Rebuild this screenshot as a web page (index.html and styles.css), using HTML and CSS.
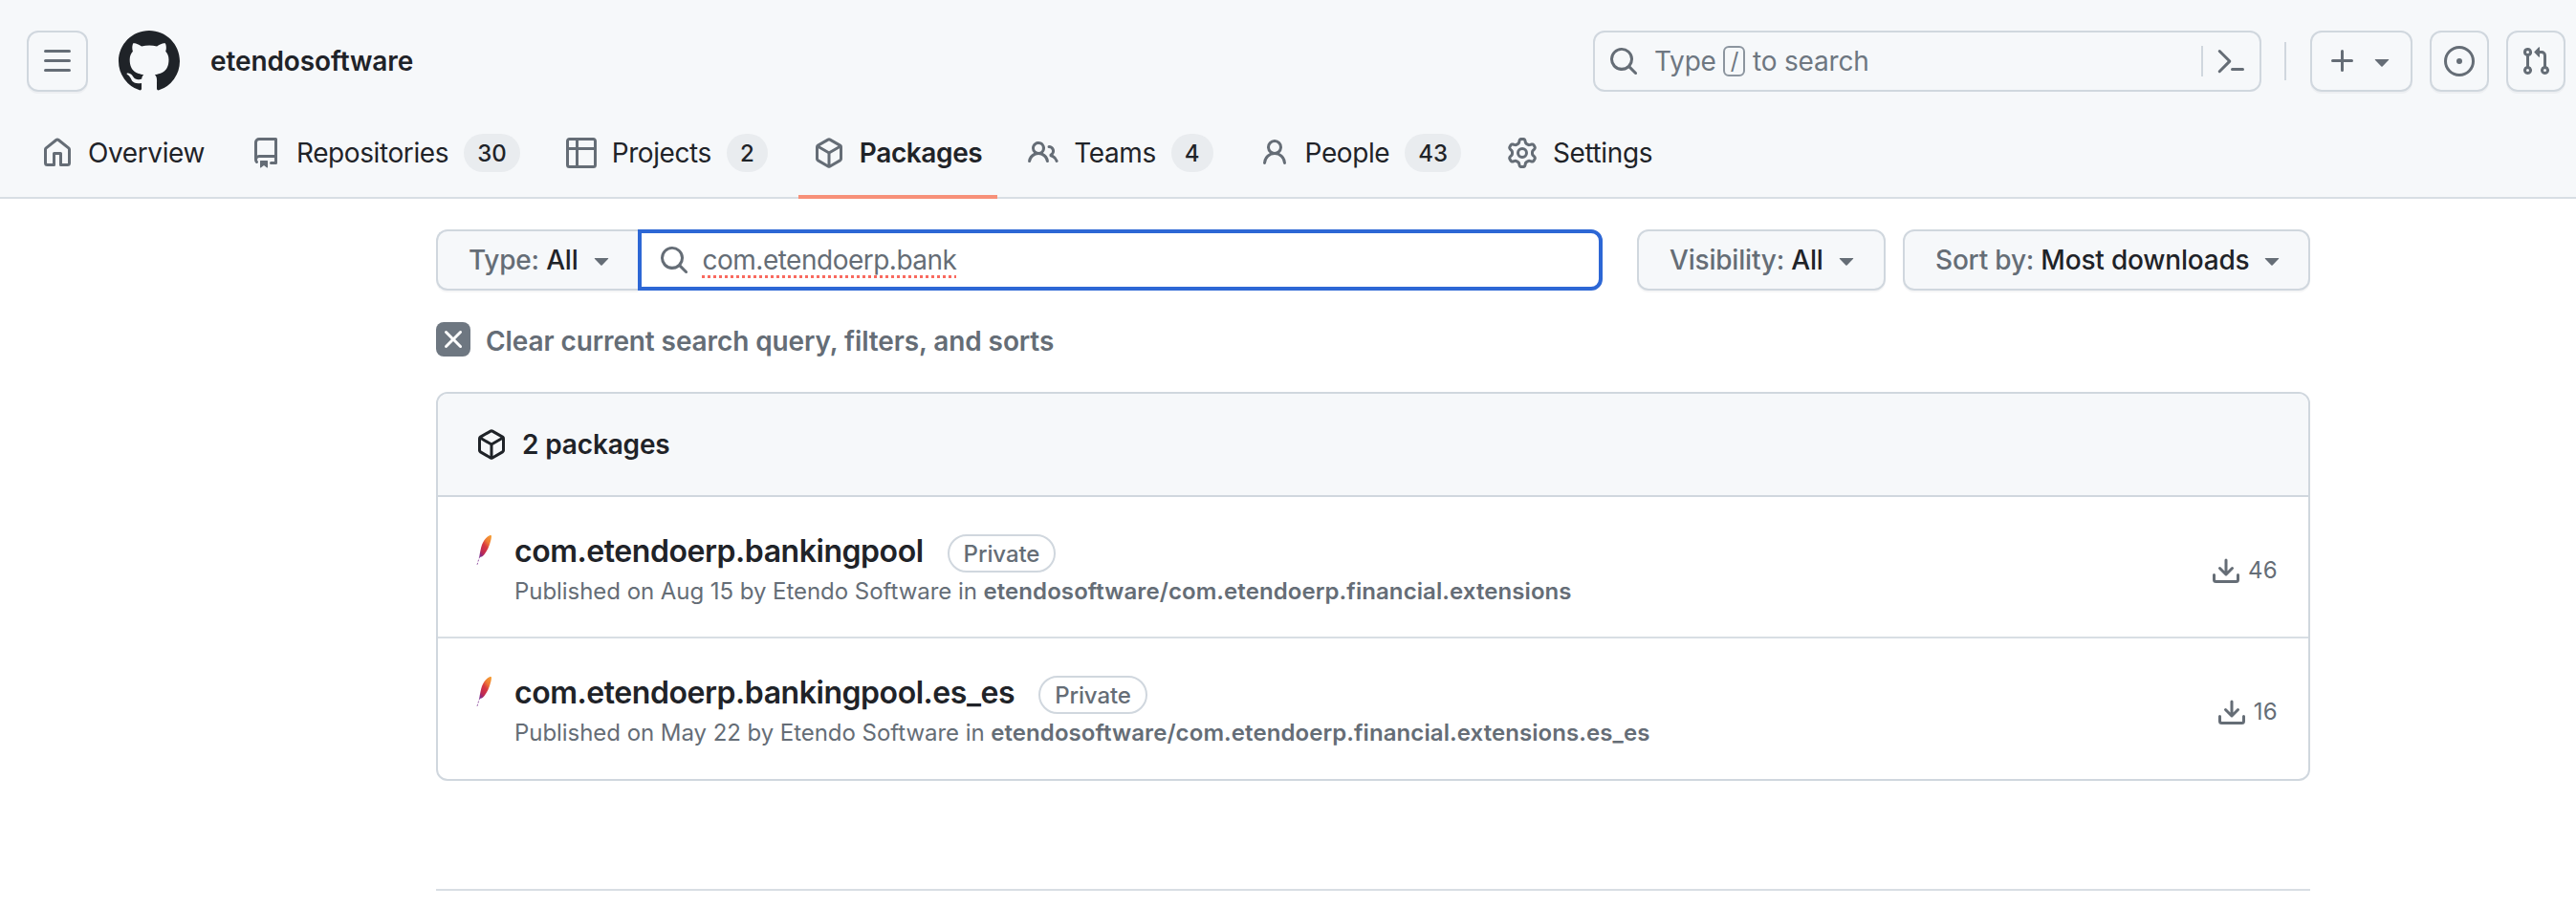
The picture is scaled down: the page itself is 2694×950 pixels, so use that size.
FILE: index.html
```html
<!DOCTYPE html>
<html lang="en">
<head>
<meta charset="utf-8">
<title>Packages · etendosoftware</title>
<link rel="stylesheet" href="styles.css">
</head>
<body>
<svg class="sprite" aria-hidden="true">
  <defs>
    <symbol id="i-bars" viewBox="0 0 16 16"><path d="M1 2.75A.75.75 0 0 1 1.75 2h12.5a.75.75 0 0 1 0 1.5H1.75A.75.75 0 0 1 1 2.75Zm0 5A.75.75 0 0 1 1.75 7h12.5a.75.75 0 0 1 0 1.5H1.75A.75.75 0 0 1 1 7.75ZM1.75 12h12.5a.75.75 0 0 1 0 1.5H1.75a.75.75 0 0 1 0-1.5Z"/></symbol>
    <symbol id="i-mark" viewBox="0 0 16 16"><path d="M8 0c4.42 0 8 3.58 8 8a8.013 8.013 0 0 1-5.45 7.59c-.4.08-.55-.17-.55-.38 0-.27.01-1.13.01-2.2 0-.75-.25-1.23-.54-1.48 1.78-.2 3.65-.88 3.65-3.95 0-.88-.31-1.59-.82-2.15.08-.2.36-1.02-.08-2.12 0 0-.67-.22-2.2.82-.64-.18-1.32-.27-2-.27-.68 0-1.36.09-2 .27-1.53-1.03-2.2-.82-2.2-.82-.44 1.1-.16 1.92-.08 2.12-.51.56-.82 1.28-.82 2.15 0 3.06 1.86 3.75 3.64 3.95-.23.2-.44.55-.51 1.07-.46.21-1.61.55-2.33-.66-.15-.24-.6-.83-1.23-.82-.67.01-.27.38.01.53.34.19.73.9.82 1.13.16.45.68 1.31 2.69.94 0 .67.01 1.3.01 1.49 0 .21-.15.45-.55.38A7.995 7.995 0 0 1 0 8c0-4.42 3.58-8 8-8Z"/></symbol>
    <symbol id="i-home" viewBox="0 0 16 16"><path d="M6.906.664a1.749 1.749 0 0 1 2.187 0l5.25 4.2c.415.332.657.835.657 1.367v7.019A1.75 1.75 0 0 1 13.25 15h-3.5a.75.75 0 0 1-.75-.75V9H7v5.25a.75.75 0 0 1-.75.75h-3.5A1.75 1.75 0 0 1 1 13.25V6.23c0-.531.242-1.034.657-1.366l5.25-4.2Zm1.25 1.171a.25.25 0 0 0-.312 0l-5.25 4.2a.25.25 0 0 0-.094.196v7.019c0 .138.112.25.25.25H5.5V8.25a.75.75 0 0 1 .75-.75h3.5a.75.75 0 0 1 .75.75v5.25h2.75a.25.25 0 0 0 .25-.25V6.23a.25.25 0 0 0-.094-.195Z"/></symbol>
    <symbol id="i-repo" viewBox="0 0 16 16"><path d="M2 2.5A2.5 2.5 0 0 1 4.5 0h8.75a.75.75 0 0 1 .75.75v12.5a.75.75 0 0 1-.75.75h-2.5a.75.75 0 0 1 0-1.5h1.75v-2h-8a1 1 0 0 0-.714 1.7.75.75 0 1 1-1.072 1.05A2.495 2.495 0 0 1 2 11.5Zm10.5-1h-8a1 1 0 0 0-1 1v6.708A2.486 2.486 0 0 1 4.5 9h8ZM5 12.25a.25.25 0 0 1 .25-.25h3.5a.25.25 0 0 1 .25.25v3.25a.25.25 0 0 1-.4.2l-1.45-1.087a.249.249 0 0 0-.3 0L5.4 15.7a.25.25 0 0 1-.4-.2Z"/></symbol>
    <symbol id="i-table" viewBox="0 0 16 16"><path d="M0 1.75C0 .784.784 0 1.75 0h12.5C15.216 0 16 .784 16 1.75v12.5A1.75 1.75 0 0 1 14.25 16H1.75A1.75 1.75 0 0 1 0 14.25ZM6.5 6.5v8h7.75a.25.25 0 0 0 .25-.25V6.5Zm8-1.5V1.75a.25.25 0 0 0-.25-.25H6.5V5Zm-13 1.5v7.75c0 .138.112.25.25.25H5v-8ZM5 5V1.5H1.75a.25.25 0 0 0-.25.25V5Z"/></symbol>
    <symbol id="i-package" viewBox="0 0 16 16"><path fill-rule="evenodd" d="M8.878.392a1.75 1.75 0 0 0-1.756 0l-5.25 3.045A1.75 1.75 0 0 0 1 4.951v6.098c0 .624.332 1.2.872 1.514l5.25 3.045a1.75 1.75 0 0 0 1.756 0l5.25-3.045c.54-.313.872-.89.872-1.514V4.951c0-.624-.332-1.2-.872-1.514ZM7.875 1.69a.25.25 0 0 1 .25 0l4.63 2.685L8 7.133 3.245 4.375l4.63-2.685ZM2.5 5.677v5.372c0 .09.047.171.125.216l4.625 2.683V8.432Zm6.25 8.271 4.625-2.683a.25.25 0 0 0 .125-.216V5.677L8.75 8.432Z"/></symbol>
    <symbol id="i-people" viewBox="0 0 16 16"><path d="M2 5.5a3.5 3.5 0 1 1 5.898 2.549 5.508 5.508 0 0 1 3.034 4.084.75.75 0 1 1-1.482.235 4 4 0 0 0-7.9 0 .75.75 0 0 1-1.482-.236A5.507 5.507 0 0 1 3.102 8.05 3.493 3.493 0 0 1 2 5.5ZM11 4a3.001 3.001 0 0 1 2.22 5.018 5.01 5.01 0 0 1 2.56 3.012.749.749 0 0 1-.885.954.752.752 0 0 1-.549-.514 3.507 3.507 0 0 0-2.522-2.372.75.75 0 0 1-.574-.73v-.352a.75.75 0 0 1 .416-.672A1.5 1.5 0 0 0 11 5.5.75.75 0 0 1 11 4Zm-5.5-.5a2 2 0 1 0-.001 3.999A2 2 0 0 0 5.5 3.5Z"/></symbol>
    <symbol id="i-person" viewBox="0 0 16 16"><path d="M10.561 8.073a6.005 6.005 0 0 1 3.432 5.142.75.75 0 1 1-1.498.07 4.5 4.5 0 0 0-8.99 0 .75.75 0 0 1-1.498-.07 6.004 6.004 0 0 1 3.431-5.142 3.999 3.999 0 1 1 5.123 0ZM10.5 5a2.5 2.5 0 1 0-5 0 2.5 2.5 0 0 0 5 0Z"/></symbol>
    <symbol id="i-gear" viewBox="0 0 16 16"><path d="M8 0a8.2 8.2 0 0 1 .701.031C9.444.095 9.99.645 10.16 1.29l.288 1.107c.018.066.079.158.212.224.231.114.454.243.668.386.123.082.233.09.299.071l1.103-.303c.644-.176 1.392.021 1.82.63.27.385.506.792.704 1.218.315.675.111 1.422-.364 1.891l-.814.806c-.049.048-.098.147-.088.294.016.257.016.515 0 .772-.01.147.038.246.088.294l.814.806c.475.469.679 1.216.364 1.891a7.977 7.977 0 0 1-.704 1.217c-.428.61-1.176.807-1.82.63l-1.102-.302c-.067-.019-.177-.011-.3.071a5.909 5.909 0 0 1-.668.386c-.133.066-.194.158-.211.224l-.29 1.106c-.168.646-.715 1.196-1.458 1.26a8.006 8.006 0 0 1-1.402 0c-.743-.064-1.289-.614-1.458-1.26l-.289-1.106c-.018-.066-.079-.158-.212-.224a5.738 5.738 0 0 1-.668-.386c-.123-.082-.233-.09-.299-.071l-1.103.303c-.644.176-1.392-.021-1.82-.63a8.12 8.12 0 0 1-.704-1.218c-.315-.675-.111-1.422.363-1.891l.815-.806c.05-.048.098-.147.088-.294a6.214 6.214 0 0 1 0-.772c.01-.147-.038-.246-.088-.294l-.815-.806C.635 6.045.431 5.298.746 4.623a7.92 7.92 0 0 1 .704-1.217c.428-.61 1.176-.807 1.82-.63l1.102.302c.067.019.177.011.3-.071.214-.143.437-.272.668-.386.133-.066.194-.158.211-.224l.29-1.106C6.009.645 6.556.095 7.299.03 7.53.01 7.764 0 8 0Zm-.571 1.525c-.036.003-.108.036-.137.146l-.289 1.105c-.147.561-.549.967-.998 1.189-.173.086-.34.183-.5.29-.417.278-.97.423-1.529.27l-1.103-.303c-.109-.03-.175.016-.195.045-.22.312-.412.644-.573.99-.014.031-.021.11.059.19l.815.806c.411.406.562.957.53 1.456a4.709 4.709 0 0 0 0 .582c.032.499-.119 1.05-.53 1.456l-.815.806c-.081.08-.073.159-.059.19.162.346.353.677.573.989.02.03.085.076.195.046l1.102-.303c.56-.153 1.113-.008 1.53.27.161.107.328.204.501.29.447.222.85.629.997 1.189l.289 1.105c.029.109.101.143.137.146a6.6 6.6 0 0 0 1.142 0c.036-.003.108-.036.137-.146l.289-1.105c.147-.561.549-.967.998-1.189.173-.086.34-.183.5-.29.417-.278.97-.423 1.529-.27l1.103.303c.109.029.175-.016.195-.045.22-.313.411-.644.573-.99.014-.031.021-.11-.059-.19l-.815-.806c-.411-.406-.562-.957-.53-1.456a4.709 4.709 0 0 0 0-.582c-.032-.499.119-1.05.53-1.456l.815-.806c.081-.08.073-.159.059-.19a6.464 6.464 0 0 0-.573-.989c-.02-.03-.085-.076-.195-.046l-1.102.303c-.56.153-1.113.008-1.53-.27a4.44 4.44 0 0 0-.501-.29c-.447-.222-.85-.629-.997-1.189l-.289-1.105c-.029-.11-.101-.143-.137-.146a6.6 6.6 0 0 0-1.142 0ZM11 8a3 3 0 1 1-6 0 3 3 0 0 1 6 0ZM9.5 8a1.5 1.5 0 1 0-3.001.001A1.5 1.5 0 0 0 9.5 8Z"/></symbol>
    <symbol id="i-search" viewBox="0 0 16 16"><path d="M10.68 11.74a6 6 0 0 1-7.922-8.982 6 6 0 0 1 8.982 7.922l3.04 3.04a.749.749 0 0 1-.326 1.275.749.749 0 0 1-.734-.215ZM11.5 7a4.499 4.499 0 1 0-8.997 0A4.499 4.499 0 0 0 11.5 7Z"/></symbol>
    <symbol id="i-terminal" viewBox="0 0 16 16"><path d="M6.354 8.04l-4.773 4.773a.75.75 0 1 0 1.061 1.06L7.945 8.57a.75.75 0 0 0 0-1.06L2.642 2.206a.75.75 0 0 0-1.06 1.061L6.353 8.04ZM8.75 11.5a.75.75 0 0 0 0 1.5h5.5a.75.75 0 0 0 0-1.5h-5.5Z"/></symbol>
    <symbol id="i-plus" viewBox="0 0 16 16"><path d="M7.75 2a.75.75 0 0 1 .75.75V7h4.25a.75.75 0 0 1 0 1.5H8.5v4.25a.75.75 0 0 1-1.5 0V8.5H2.75a.75.75 0 0 1 0-1.5H7V2.75A.75.75 0 0 1 7.75 2Z"/></symbol>
    <symbol id="i-caret" viewBox="0 0 16 16"><path d="m4.427 7.427 3.396 3.396a.25.25 0 0 0 .354 0l3.396-3.396A.25.25 0 0 0 11.396 7H4.604a.25.25 0 0 0-.177.427Z"/></symbol>
    <symbol id="i-issue" viewBox="0 0 16 16"><path d="M8 9.5a1.5 1.5 0 1 0 0-3 1.5 1.5 0 0 0 0 3Z"/><path d="M8 0a8 8 0 1 1 0 16A8 8 0 0 1 8 0ZM1.5 8a6.5 6.5 0 1 0 13 0 6.5 6.5 0 0 0-13 0Z"/></symbol>
    <symbol id="i-pr" viewBox="0 0 16 16"><path d="M1.5 3.25a2.25 2.25 0 1 1 3 2.122v5.256a2.251 2.251 0 1 1-1.5 0V5.372A2.25 2.25 0 0 1 1.5 3.25Zm5.677-.177L9.573.677A.25.25 0 0 1 10 .854V2.5h1A2.5 2.5 0 0 1 13.5 5v5.628a2.251 2.251 0 1 1-1.5 0V5a1 1 0 0 0-1-1h-1v1.646a.25.25 0 0 1-.427.177L7.177 3.427a.25.25 0 0 1 0-.354ZM3.75 2.5a.75.75 0 1 0 0 1.5.75.75 0 0 0 0-1.5Zm0 9.5a.75.75 0 1 0 0 1.5.75.75 0 0 0 0-1.5Zm8.25.75a.75.75 0 1 0 1.5 0 .75.75 0 0 0-1.5 0Z"/></symbol>
    <symbol id="i-download" viewBox="0 0 16 16"><path d="M2.75 14A1.75 1.75 0 0 1 1 12.25v-2.5a.75.75 0 0 1 1.5 0v2.5c0 .138.112.25.25.25h10.5a.25.25 0 0 0 .25-.25v-2.5a.75.75 0 0 1 1.5 0v2.5A1.75 1.75 0 0 1 13.25 14Z"/><path d="M7.25 7.689V2a.75.75 0 0 1 1.5 0v5.689l1.97-1.969a.749.749 0 1 1 1.06 1.06l-3.25 3.25a.749.749 0 0 1-1.06 0L4.22 6.78a.749.749 0 1 1 1.06-1.06l1.97 1.969Z"/></symbol>
    <symbol id="i-x" viewBox="0 0 16 16"><path d="M3.72 3.72a.75.75 0 0 1 1.06 0L8 6.94l3.22-3.22a.749.749 0 0 1 1.275.326.749.749 0 0 1-.215.734L9.06 8l3.22 3.22a.749.749 0 0 1-.326 1.275.749.749 0 0 1-.734-.215L8 9.06l-3.22 3.22a.751.751 0 0 1-1.042-.018.751.751 0 0 1-.018-1.042L6.94 8 3.72 4.78a.75.75 0 0 1 0-1.06Z"/></symbol>
    <linearGradient id="feather-grad" x1="0.85" y1="0" x2="0.15" y2="1">
      <stop offset="0" stop-color="#f59b32"/>
      <stop offset="0.28" stop-color="#ee7a36"/>
      <stop offset="0.5" stop-color="#d8383f"/>
      <stop offset="0.8" stop-color="#bd2a55"/>
      <stop offset="1" stop-color="#7d2a8c"/>
    </linearGradient>
    <symbol id="i-feather" viewBox="0 0 40 32"><path d="M14.5 0C11 1.5 7.8 5 6 10 4.8 13.5 4 18 3.2 23c2.2-.3 4-1 5.4-3 2.4-3.3 4.2-6.6 5.4-10.2C15 6.6 16 3 16 .8 15.8.2 15.2-.2 14.5 0Z" fill="url(#feather-grad)"/><path d="M3.8 22.4 2.6 25.6 0.8 31.6" fill="none" stroke="#8b4a9c" stroke-width="0.9" stroke-dasharray="2 1.4"/></symbol>
  </defs>
</svg>

<header class="app-header">
  <div class="top-row">
    <button class="icon-btn menu-btn" type="button"><svg class="ic"><use href="#i-bars"/></svg></button>
    <svg class="logo"><use href="#i-mark"/></svg>
    <span class="org">etendosoftware</span>
    <div class="top-spacer"></div>
    <div class="global-search">
      <svg class="ic"><use href="#i-search"/></svg>
      <span class="gs-text">Type <kbd class="slash">/</kbd> to search</span>
      <span class="gs-divider"></span>
      <svg class="ic"><use href="#i-terminal"/></svg>
    </div>
    <span class="top-divider"></span>
    <button class="icon-btn plus-btn" type="button"><svg class="ic"><use href="#i-plus"/></svg><svg class="ic"><use href="#i-caret"/></svg></button>
    <button class="icon-btn issue-btn" type="button"><svg class="ic"><use href="#i-issue"/></svg></button>
    <button class="icon-btn pr-btn" type="button"><svg class="ic"><use href="#i-pr"/></svg></button>
  </div>
  <nav class="tabs">
    <a class="tab"><svg class="ic"><use href="#i-home"/></svg>Overview</a>
    <a class="tab"><svg class="ic"><use href="#i-repo"/></svg>Repositories<span class="counter">30</span></a>
    <a class="tab"><svg class="ic"><use href="#i-table"/></svg>Projects<span class="counter">2</span></a>
    <a class="tab active"><svg class="ic"><use href="#i-package"/></svg>Packages</a>
    <a class="tab"><svg class="ic"><use href="#i-people"/></svg>Teams<span class="counter">4</span></a>
    <a class="tab"><svg class="ic"><use href="#i-person"/></svg>People<span class="counter">43</span></a>
    <a class="tab"><svg class="ic"><use href="#i-gear"/></svg>Settings</a>
  </nav>
</header>

<main class="content">
  <div class="filters">
    <div class="filter-group">
      <button class="select-btn type-btn" type="button"><span class="sel-label">Type:</span> All<svg class="ic caret"><use href="#i-caret"/></svg></button>
      <div class="query">
        <svg class="ic"><use href="#i-search"/></svg>
        <span class="query-text">com.etendoerp.bank</span>
      </div>
    </div>
    <button class="select-btn vis-btn" type="button"><span class="sel-label">Visibility:</span> All<svg class="ic caret"><use href="#i-caret"/></svg></button>
    <button class="select-btn sort-btn" type="button"><span class="sel-label">Sort by:</span> Most downloads<svg class="ic caret"><use href="#i-caret"/></svg></button>
  </div>

  <div class="clear-row">
    <span class="clear-icon"><svg class="ic"><use href="#i-x"/></svg></span>
    <span class="clear-text">Clear current search query, filters, and sorts</span>
  </div>

  <section class="box">
    <div class="box-header"><svg class="ic"><use href="#i-package"/></svg>2 packages</div>
    <div class="row">
      <svg class="feather"><use href="#i-feather"/></svg>
      <div class="row-main">
        <div class="row-title"><a class="pkg-name">com.etendoerp.bankingpool</a><span class="badge">Private</span></div>
        <div class="row-sub">Published on Aug 15 by Etendo Software in <strong>etendosoftware/com.etendoerp.financial.extensions</strong></div>
      </div>
      <div class="downloads"><svg class="ic"><use href="#i-download"/></svg><span class="count">46</span></div>
    </div>
    <div class="row">
      <svg class="feather"><use href="#i-feather"/></svg>
      <div class="row-main">
        <div class="row-title"><a class="pkg-name">com.etendoerp.bankingpool.es_es</a><span class="badge">Private</span></div>
        <div class="row-sub">Published on May 22 by Etendo Software in <strong>etendosoftware/com.etendoerp.financial.extensions.es_es</strong></div>
      </div>
      <div class="downloads"><svg class="ic"><use href="#i-download"/></svg><span class="count">16</span></div>
    </div>
  </section>

  <div class="foot-line"></div>
</main>
</body>
</html>
```

FILE: styles.css
```css
* { box-sizing: border-box; }
html, body { margin: 0; padding: 0; height: 950px; overflow: hidden; background: #fff; }
body { font-family: Inter, "Liberation Sans", sans-serif; font-size: 28px; color: #1f2328; }
.sprite { width: 0; height: 0; display: block; }
.ic { width: 32px; height: 32px; fill: #656d76; flex: none; display: block; }
button { font: inherit; color: inherit; cursor: pointer; }

.app-header { height: 208px; padding-top: 32px; background: #f6f8fa; box-shadow: inset 0 -2px 0 #d8dee4; }
.top-row { display: flex; align-items: center; height: 64px; margin: 0 11px 0 28px; }
.icon-btn { display: flex; align-items: center; justify-content: center; height: 64px; padding: 0; background: transparent; border: 2px solid #d0d7de; border-radius: 12px; box-shadow: 0 2px 0 rgba(31,35,40,.04); }
.menu-btn { width: 64px; }
.logo { width: 64px; height: 64px; fill: #1f2328; margin-left: 32px; flex: none; }
.org { margin-left: 32px; font-weight: 600; letter-spacing: -0.1px; }
.top-spacer { flex: 1; }
.global-search { display: flex; align-items: center; width: 699px; height: 64px; border: 2px solid #d0d7de; border-radius: 12px; padding: 0 14px; color: #6e7781; letter-spacing: -0.2px; }
.gs-text { display: flex; align-items: center; margin-left: 16px; flex: 1; white-space: pre; }
.slash { display: inline-flex; align-items: center; justify-content: center; width: 23px; height: 32px; border: 2px solid #8c959f; border-radius: 6px; font: inherit; font-size: 24px; line-height: 1; }
.gs-divider { width: 2px; height: 32px; background: #d0d7de; margin-right: 13px; }
.top-divider { width: 2px; height: 40px; background: #d0d7de; margin: 0 25px 0 24px; flex: none; }
.plus-btn { width: 107px; gap: 9px; padding-left: 2px; }
.issue-btn { width: 62px; margin-left: 18px; }
.pr-btn { width: 62px; margin-left: 18px; }

.tabs { display: flex; gap: 16px; height: 96px; margin-top: 16px; padding-left: 28px; }
.tab { display: flex; align-items: center; padding: 0 16px; height: 96px; white-space: nowrap; letter-spacing: -0.4px; }
.tab .ic { margin-right: 16px; }
.tab.active { font-weight: 600; box-shadow: inset 0 -4px 0 #f79078; }
.counter { display: flex; align-items: center; justify-content: center; min-width: 40px; height: 40px; padding: 0 14px; margin-left: 16px; border-radius: 20px; background: #e9ecef; font-size: 24px; font-weight: 500; letter-spacing: 0; }

.content { width: 1960px; margin-left: 456px; }
.filters { display: flex; margin-top: 32px; gap: 18px; }
.filter-group { display: flex; flex: 1; margin-right: 18px; }
.select-btn { display: flex; align-items: center; height: 64px; padding: 0 22px 0 32px; background: #f6f8fa; border: 2px solid #d0d7de; border-radius: 12px; box-shadow: 0 2px 0 rgba(31,35,40,.04); font-weight: 500; white-space: pre; color: #1f2328; letter-spacing: -0.2px; }
.sel-label { color: #656d76; }
.caret { margin-left: 8px; }
.type-btn { border-radius: 12px 0 0 12px; border-right: 0; }
.vis-btn { width: 260px; }
.sort-btn { width: 426px; }
.query { flex: 1; display: flex; align-items: center; height: 64px; border: 4px solid #2d67d5; border-radius: 0 12px 12px 0; background: #fff; padding-left: 18px; }
.query-text { margin-left: 14px; color: #656d76; letter-spacing: -0.5px; text-decoration: underline dotted #f8695f 3px; text-underline-offset: 6px; }

.clear-row { display: flex; align-items: center; margin-top: 33px; height: 36px; font-weight: 600; color: #656d76; }
.clear-icon { display: flex; align-items: center; justify-content: center; width: 36px; height: 36px; margin-right: 16px; border-radius: 8px; background: #6e7781; }
.clear-icon .ic { fill: #fff; }
.clear-text { padding-top: 3px; letter-spacing: -0.1px; }

.box { margin-top: 37px; border: 2px solid #d0d7de; border-radius: 12px; overflow: hidden; height: 407px; }
.box-header { display: flex; align-items: center; height: 108px; padding: 0 40px; background: #f6f8fa; border-bottom: 2px solid #d0d7de; font-weight: 600; letter-spacing: -0.15px; }
.box-header .ic { fill: #1f2328; margin-right: 16px; }
.row { display: flex; align-items: flex-start; height: 148px; padding: 39px 32px 0 40px; border-bottom: 2px solid #d8dee4; }
.row:last-child { border-bottom: 0; height: 147px; }
.feather { width: 40px; height: 32px; flex: none; margin-top: 1px; }
.row-main { flex: 1; }
.row-title { display: flex; align-items: center; height: 40px; }
.pkg-name { font-size: 32px; font-weight: 600; letter-spacing: -0.45px; margin-bottom: 6px; }
.badge { display: flex; align-items: center; height: 40px; margin-left: 25px; padding: 0 15px; border: 2px solid #d0d7de; border-radius: 20px; font-size: 24px; font-weight: 500; color: #656d76; letter-spacing: -0.1px; }
.row-sub { margin-top: 2px; font-size: 24px; line-height: 36px; color: #656d76; letter-spacing: -0.05px; }
.row-sub strong { font-weight: 600; letter-spacing: 0.08px; }
.downloads { display: flex; align-items: flex-start; gap: 7px; margin-top: 23px; font-size: 24px; line-height: 30px; color: #656d76; letter-spacing: 0.3px; }

.foot-line { height: 2px; margin-top: 113px; background: #d8dee4; }
```
